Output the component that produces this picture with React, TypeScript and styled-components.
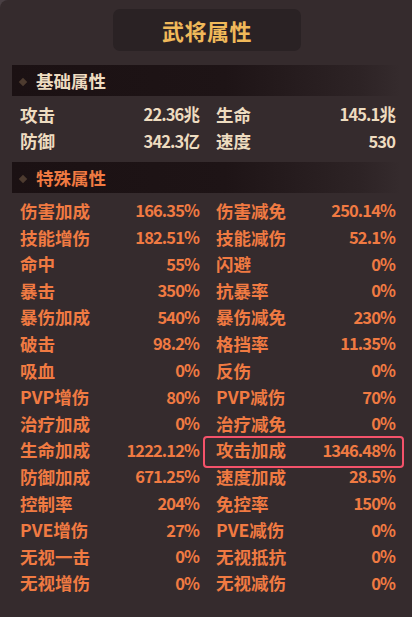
import React from "react";
import styled, { createGlobalStyle, css } from "styled-components";

const GlobalStyle = createGlobalStyle`
  html, body {
    margin: 0;
    padding: 0;
    background: #4a4044;
  }
  body {
    font-family: "Noto Sans CJK SC", "Noto Sans", sans-serif;
  }
`;

type Tone = "cream" | "orange";

const toneColor: Record<Tone, string> = {
  cream: "#eedcc0",
  orange: "#f07a42",
};

const Panel = styled.div`
  width: 412px;
  height: 617px;
  box-sizing: border-box;
  background: #352b2d;
  border-top-left-radius: 8px;
  padding-top: 9px;
  display: flex;
  flex-direction: column;
  overflow: hidden;
`;

const TitleBox = styled.div`
  align-self: center;
  width: 188px;
  height: 42px;
  margin-left: 2px;
  border-radius: 7px;
  background: #2a2224;
  display: flex;
  align-items: center;
  justify-content: center;
  color: #f0b95a;
  font-size: 22px;
  font-weight: 700;
  letter-spacing: 0.5px;
`;

const SectionHeader = styled.div<{ $first?: boolean }>`
  margin: ${(p) => (p.$first ? "14px" : "0")} 12px 0 12px;
  height: 31px;
  background: linear-gradient(
    90deg,
    #1b1113 0%,
    #1e1416 55%,
    rgba(40, 30, 32, 0.6) 90%,
    rgba(53, 43, 45, 0) 100%
  );
  display: flex;
  align-items: center;
  padding-left: 8px;
  gap: 10px;
`;

const Diamond = styled.span`
  width: 6px;
  height: 6px;
  background: #4d3b2f;
  transform: rotate(45deg);
  margin-top: 2px;
`;

const SectionTitle = styled.span<{ $tone: Tone }>`
  color: ${(p) => toneColor[p.$tone]};
  font-size: 17.5px;
  font-weight: 700;
  line-height: 1;
`;

const StatGrid = styled.div<{ $pt: number; $pb: number }>`
  display: grid;
  grid-template-columns: 180px 180px;
  grid-auto-rows: 26.6px;
  column-gap: 16px;
  padding: ${(p) => p.$pt}px 0 ${(p) => p.$pb}px 20px;
`;

const Cell = styled.div<{ $highlight?: boolean }>`
  position: relative;
  display: flex;
  align-items: center;
  justify-content: space-between;
  ${(p) =>
    p.$highlight &&
    css`
      &::after {
        content: "";
        position: absolute;
        top: -1px;
        bottom: -5px;
        left: -13px;
        right: -8px;
        border: 2.5px solid #f4526a;
        border-radius: 4px;
        pointer-events: none;
      }
    `}
`;

const Label = styled.span<{ $tone: Tone }>`
  color: ${(p) => toneColor[p.$tone]};
  font-size: 17.5px;
  font-weight: 700;
  white-space: nowrap;
`;

const Value = styled.span<{ $tone: Tone }>`
  color: ${(p) => toneColor[p.$tone]};
  font-size: 16.5px;
  font-weight: 700;
  letter-spacing: -0.9px;
  padding-right: 1px;
  white-space: nowrap;
`;

type Stat = { label: string; value: string; highlight?: boolean };

const baseStats: Stat[] = [
  { label: "攻击", value: "22.36兆" },
  { label: "生命", value: "145.1兆" },
  { label: "防御", value: "342.3亿" },
  { label: "速度", value: "530" },
];

const specialStats: Stat[] = [
  { label: "伤害加成", value: "166.35%" },
  { label: "伤害减免", value: "250.14%" },
  { label: "技能增伤", value: "182.51%" },
  { label: "技能减伤", value: "52.1%" },
  { label: "命中", value: "55%" },
  { label: "闪避", value: "0%" },
  { label: "暴击", value: "350%" },
  { label: "抗暴率", value: "0%" },
  { label: "暴伤加成", value: "540%" },
  { label: "暴伤减免", value: "230%" },
  { label: "破击", value: "98.2%" },
  { label: "格挡率", value: "11.35%" },
  { label: "吸血", value: "0%" },
  { label: "反伤", value: "0%" },
  { label: "PVP增伤", value: "80%" },
  { label: "PVP减伤", value: "70%" },
  { label: "治疗加成", value: "0%" },
  { label: "治疗减免", value: "0%" },
  { label: "生命加成", value: "1222.12%" },
  { label: "攻击加成", value: "1346.48%", highlight: true },
  { label: "防御加成", value: "671.25%" },
  { label: "速度加成", value: "28.5%" },
  { label: "控制率", value: "204%" },
  { label: "免控率", value: "150%" },
  { label: "PVE增伤", value: "27%" },
  { label: "PVE减伤", value: "0%" },
  { label: "无视一击", value: "0%" },
  { label: "无视抵抗", value: "0%" },
  { label: "无视增伤", value: "0%" },
  { label: "无视减伤", value: "0%" },
];

const StatList: React.FC<{ stats: Stat[]; tone: Tone; pt: number; pb: number }> = ({
  stats,
  tone,
  pt,
  pb,
}) => (
  <StatGrid $pt={pt} $pb={pb}>
    {stats.map((s) => (
      <Cell key={s.label} $highlight={s.highlight}>
        <Label $tone={tone}>{s.label}</Label>
        <Value $tone={tone}>{s.value}</Value>
      </Cell>
    ))}
  </StatGrid>
);

export default function App() {
  return (
    <>
      <GlobalStyle />
      <Panel>
        <TitleBox>武将属性</TitleBox>
        <SectionHeader $first>
          <Diamond />
          <SectionTitle $tone="cream">基础属性</SectionTitle>
        </SectionHeader>
        <StatList stats={baseStats} tone="cream" pt={5} pb={8} />
        <SectionHeader>
          <Diamond />
          <SectionTitle $tone="orange">特殊属性</SectionTitle>
        </SectionHeader>
        <StatList stats={specialStats} tone="orange" pt={4} pb={0} />
      </Panel>
    </>
  );
}
